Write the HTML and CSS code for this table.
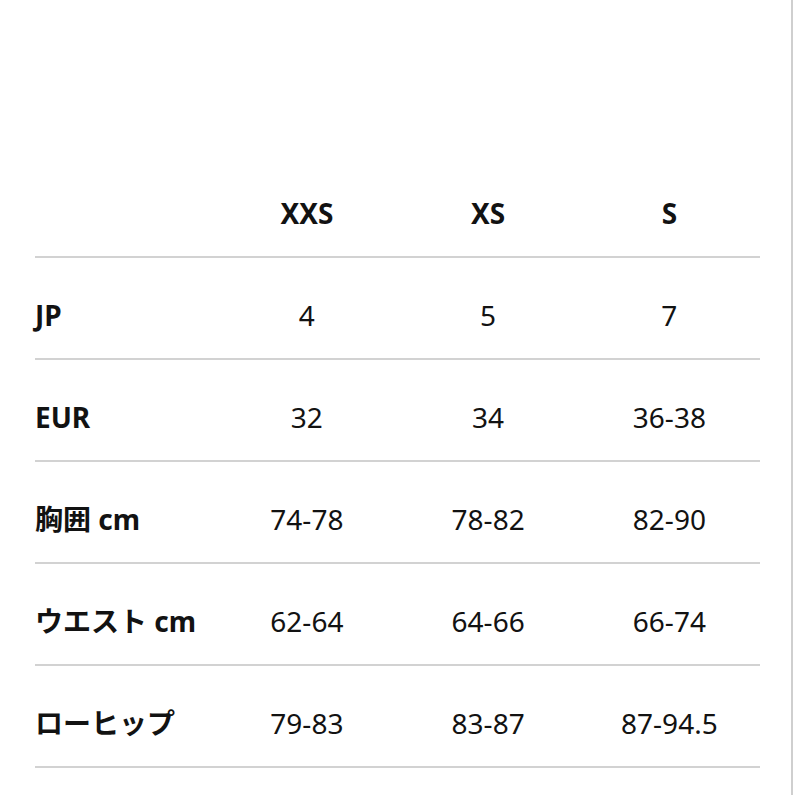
FILE: index.html
```html
<!DOCTYPE html>
<html lang="ja">
<head>
<meta charset="utf-8">
<title>サイズ表</title>
<link rel="stylesheet" href="styles.css">
</head>
<body>
<div class="page">
  <div class="table">
    <div class="row head">
      <div class="cell label"></div>
      <div class="cell">XXS</div>
      <div class="cell">XS</div>
      <div class="cell">S</div>
    </div>
    <div class="row">
      <div class="cell label">JP</div>
      <div class="cell">4</div>
      <div class="cell">5</div>
      <div class="cell">7</div>
    </div>
    <div class="row">
      <div class="cell label">EUR</div>
      <div class="cell">32</div>
      <div class="cell">34</div>
      <div class="cell">36-38</div>
    </div>
    <div class="row">
      <div class="cell label">胸囲 cm</div>
      <div class="cell">74-78</div>
      <div class="cell">78-82</div>
      <div class="cell">82-90</div>
    </div>
    <div class="row">
      <div class="cell label">ウエスト cm</div>
      <div class="cell">62-64</div>
      <div class="cell">64-66</div>
      <div class="cell">66-74</div>
    </div>
    <div class="row">
      <div class="cell label">ローヒップ</div>
      <div class="cell">79-83</div>
      <div class="cell">83-87</div>
      <div class="cell">87-94.5</div>
    </div>
  </div>
</div>
</body>
</html>
```

FILE: styles.css
```css
html, body {
  margin: 0;
  padding: 0;
  background: #fff;
}

.page {
  width: 793px;
  height: 795px;
  border-right: 2px solid #cfcfcf;
  padding-top: 170px;
  box-sizing: border-box;
  font-family: "Noto Sans", "Noto Sans CJK JP", sans-serif;
  color: #121212;
  overflow: hidden;
}

.table {
  margin-left: 35px;
  width: 725px;
}

.row {
  display: grid;
  grid-template-columns: repeat(4, 1fr);
  height: 102px;
  padding-top: 14px;
  box-sizing: border-box;
  border-bottom: 2px solid #d2d2d2;
  align-items: center;
  font-size: 28px;
}

.row.head {
  height: 88px;
  padding-top: 0;
  font-weight: 700;
}

.cell {
  text-align: center;
  line-height: 1;
}

.cell.label {
  text-align: left;
  font-weight: 700;
}
```
